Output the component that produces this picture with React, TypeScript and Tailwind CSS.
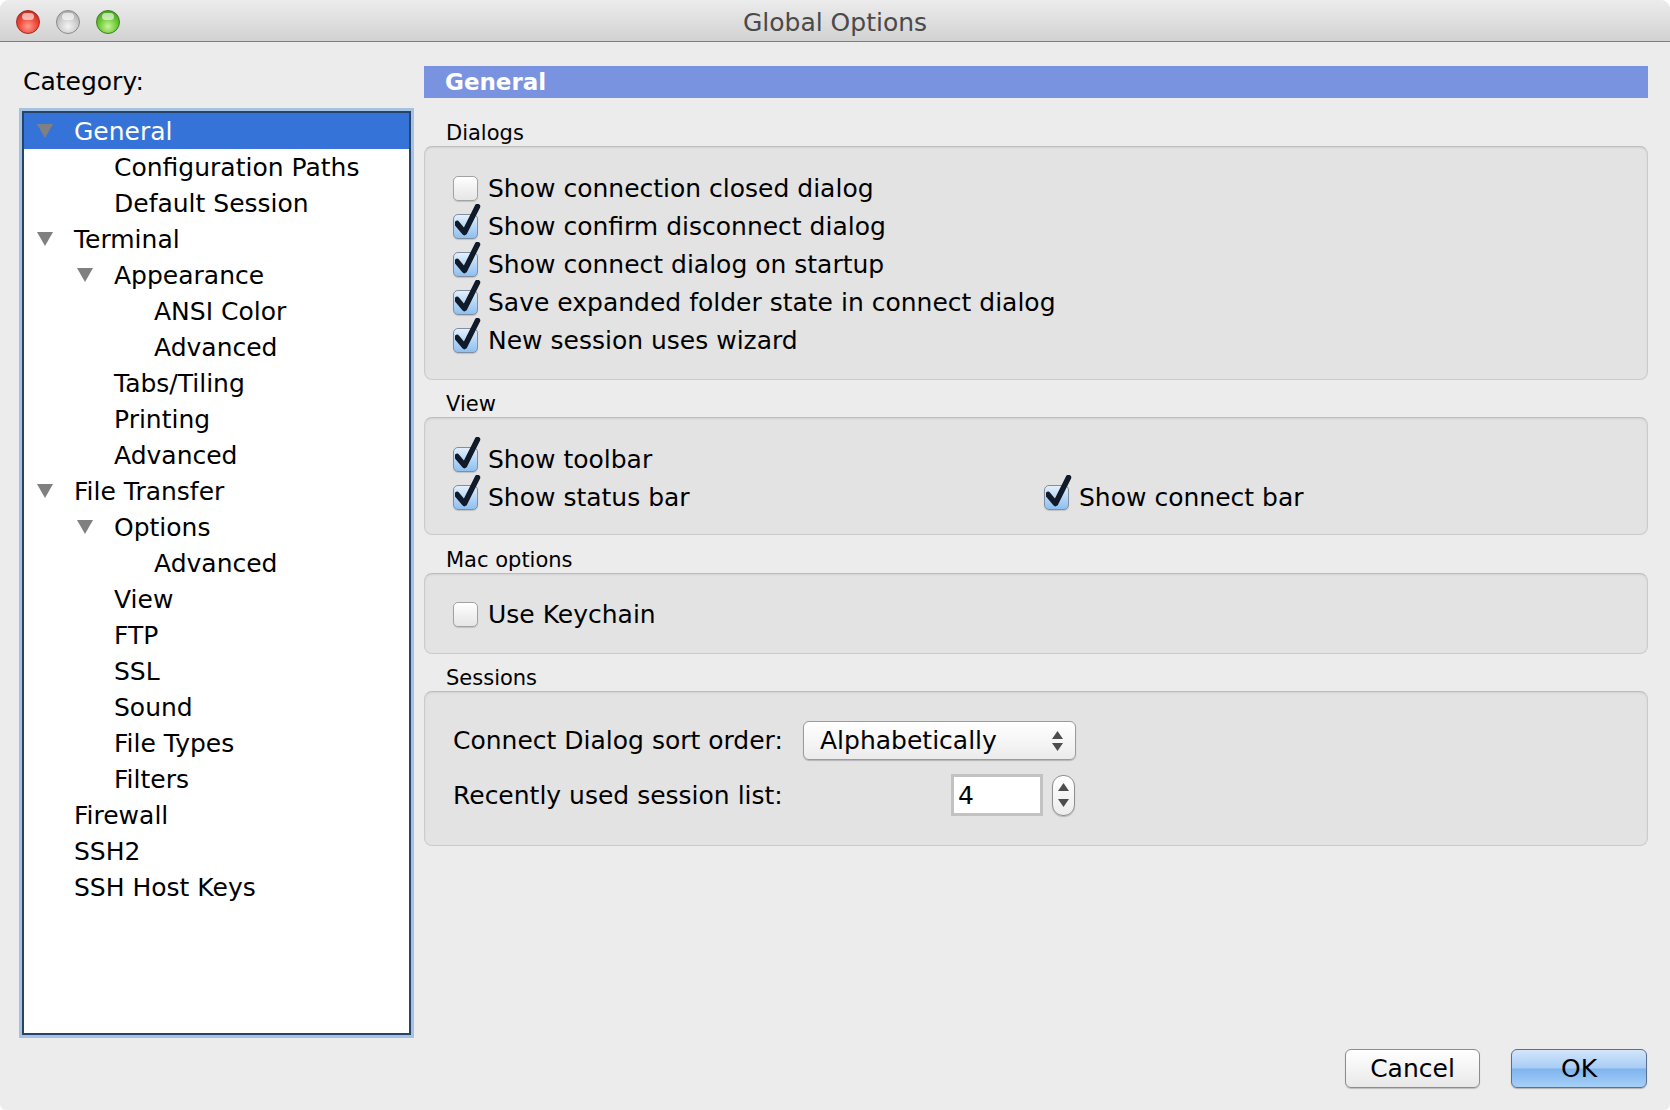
import React from 'react';

type TreeItem = { label: string; level: number; expanded?: boolean; selected?: boolean };

const tree: TreeItem[] = [
  { label: 'General', level: 0, expanded: true, selected: true },
  { label: 'Configuration Paths', level: 1 },
  { label: 'Default Session', level: 1 },
  { label: 'Terminal', level: 0, expanded: true },
  { label: 'Appearance', level: 1, expanded: true },
  { label: 'ANSI Color', level: 2 },
  { label: 'Advanced', level: 2 },
  { label: 'Tabs/Tiling', level: 1 },
  { label: 'Printing', level: 1 },
  { label: 'Advanced', level: 1 },
  { label: 'File Transfer', level: 0, expanded: true },
  { label: 'Options', level: 1, expanded: true },
  { label: 'Advanced', level: 2 },
  { label: 'View', level: 1 },
  { label: 'FTP', level: 1 },
  { label: 'SSL', level: 1 },
  { label: 'Sound', level: 1 },
  { label: 'File Types', level: 1 },
  { label: 'Filters', level: 1 },
  { label: 'Firewall', level: 0 },
  { label: 'SSH2', level: 0 },
  { label: 'SSH Host Keys', level: 0 },
];

const indent = ['pl-[13px]', 'pl-[53px]', 'pl-[93px]'];

function Triangle() {
  return (
    <svg width="16" height="14" viewBox="0 0 16 14" className="shrink-0">
      <path d="M0 0 H16 L8 14 Z" fill="#808080" />
    </svg>
  );
}

function TreeRow({ item }: { item: TreeItem }) {
  return (
    <div
      className={`flex items-center h-[36px] ${indent[item.level]} ${
        item.selected ? 'bg-[#3673d8] text-white' : 'text-black'
      }`}
    >
      <span className="w-[37px] shrink-0 flex items-center">{item.expanded && <Triangle />}</span>
      <span className="text-[25px] leading-none">{item.label}</span>
    </div>
  );
}

function Checkbox({ checked }: { checked?: boolean }) {
  return (
    <span className="relative shrink-0 w-[25px] h-[25px]">
      <span
        className={`block w-full h-full rounded-[5px] border ${
          checked
            ? 'border-[#7f8ea3] bg-[linear-gradient(#e4f0fc,#b3d4f5_55%,#8ec0f0)]'
            : 'border-[#a2a2a2] bg-[linear-gradient(#ffffff,#f1f1f1_50%,#e6e6e6)]'
        } shadow-[0_1px_1px_rgba(0,0,0,0.15)]`}
      />
      {checked && (
        <svg width="30" height="34" viewBox="0 0 30 34" className="absolute left-[2px] top-[-10px]">
          <path
            d="M2 19.5 L9.5 28.5 L22.5 2.5"
            fill="none"
            stroke="#101a28"
            strokeWidth="5.5"
            strokeLinecap="round"
            strokeLinejoin="round"
          />
        </svg>
      )}
    </span>
  );
}

function CheckRow({ label, checked }: { label: string; checked?: boolean }) {
  return (
    <div className="flex items-center h-[38px] gap-[10px]">
      <Checkbox checked={checked} />
      <span className="text-[25px] leading-none text-black">{label}</span>
    </div>
  );
}

function GroupLabel({ children, className }: { children: React.ReactNode; className: string }) {
  return <div className={`h-[26px] leading-[26px] text-[21px] text-black pl-[22px] ${className}`}>{children}</div>;
}

function GroupBox({ children, className }: { children: React.ReactNode; className: string }) {
  return (
    <div
      className={`rounded-[8px] border border-[#cbcbcb] border-t-[#bdbdbd] bg-[#e3e3e3] shadow-[inset_0_1px_2px_rgba(0,0,0,0.08)] pl-[28px] ${className}`}
    >
      {children}
    </div>
  );
}

function UpDown({ size = 'sm' }: { size?: 'sm' | 'lg' }) {
  return (
    <span className={`flex flex-col items-center ${size === 'lg' ? 'gap-[8px]' : 'gap-[4px]'}`}>
      <svg width="11" height="8" viewBox="0 0 11 8">
        <path d="M5.5 0 L11 8 H0 Z" fill="#4d4d4d" />
      </svg>
      <svg width="11" height="8" viewBox="0 0 11 8">
        <path d="M0 0 H11 L5.5 8 Z" fill="#4d4d4d" />
      </svg>
    </span>
  );
}

function TrafficLight({ color }: { color: 'red' | 'gray' | 'green' }) {
  const bg = {
    red: 'bg-[radial-gradient(circle_at_50%_70%,#ff9c8f_0%,#f04b3c_45%,#b8160c_100%)] border-[#9c2a22]',
    gray: 'bg-[radial-gradient(circle_at_50%_70%,#f4f4f4_0%,#cfcfcf_45%,#9b9b9b_100%)] border-[#8a8a8a]',
    green: 'bg-[radial-gradient(circle_at_50%_70%,#c7f59a_0%,#72cc3a_45%,#2f8a10_100%)] border-[#3f7d23]',
  }[color];
  return (
    <span className={`relative w-[24px] h-[24px] rounded-full border ${bg}`}>
      <span className="absolute left-[5px] top-[2px] w-[12px] h-[7px] rounded-full bg-white/60" />
    </span>
  );
}

export default function App() {
  return (
    <div className="w-[1670px] h-[1110px] bg-white font-['DejaVu_Sans',sans-serif]">
      <div className="flex flex-col h-full bg-[#ececec] rounded-t-[9px] rounded-b-[6px] overflow-hidden">
        {/* title bar */}
        <div className="relative h-[42px] shrink-0 flex items-center border-b border-[#7d7d7d] bg-[linear-gradient(#ececec,#d2d2d2)]">
          <div className="flex items-center gap-[16px] pl-[16px] pt-[2px]">
            <TrafficLight color="red" />
            <TrafficLight color="gray" />
            <TrafficLight color="green" />
          </div>
          <div className="absolute inset-x-0 top-0 h-[42px] pt-[3px] flex items-center justify-center text-[25px] text-[#4a4a4a] pointer-events-none">
            Global Options
          </div>
        </div>

        <div className="flex">
          {/* category tree */}
          <div className="w-[411px] shrink-0 pl-[22px]">
            <div className="mt-[25px] h-[30px] leading-[30px] text-[25px] text-black pl-[1px]">Category:</div>
            <div className="mt-[14px] h-[924px] bg-white border-2 border-[#26446a] shadow-[0_0_0_3px_rgba(110,160,220,0.55)]">
              {tree.map((item, i) => (
                <TreeRow key={i} item={item} />
              ))}
            </div>
          </div>

          {/* settings panel */}
          <div className="flex-1 pl-[13px] pr-[22px]">
            <div className="mt-[24px] h-[32px] bg-[#7a93e1] flex items-center pl-[21px] text-white font-bold text-[23px]">
              General
            </div>

            <GroupLabel className="mt-[22px]">Dialogs</GroupLabel>
            <GroupBox className="pt-[22px] pb-[20px]">
              <CheckRow label="Show connection closed dialog" />
              <CheckRow label="Show confirm disconnect dialog" checked />
              <CheckRow label="Show connect dialog on startup" checked />
              <CheckRow label="Save expanded folder state in connect dialog" checked />
              <CheckRow label="New session uses wizard" checked />
            </GroupBox>

            <GroupLabel className="mt-[11px]">View</GroupLabel>
            <GroupBox className="pt-[22px] pb-[18px]">
              <CheckRow label="Show toolbar" checked />
              <div className="flex">
                <div className="w-[591px]">
                  <CheckRow label="Show status bar" checked />
                </div>
                <CheckRow label="Show connect bar" checked />
              </div>
            </GroupBox>

            <GroupLabel className="mt-[12px]">Mac options</GroupLabel>
            <GroupBox className="pt-[21px] pb-[20px]">
              <CheckRow label="Use Keychain" />
            </GroupBox>

            <GroupLabel className="mt-[11px]">Sessions</GroupLabel>
            <GroupBox className="pt-[29px] pb-[29px]">
              <div className="flex items-center h-[39px]">
                <span className="w-[350px] text-[25px] leading-none text-black">Connect Dialog sort order:</span>
                <div className="w-[273px] h-[39px] rounded-[6px] border border-[#9b9b9b] bg-[linear-gradient(#ffffff,#f6f6f6_50%,#ebebeb)] shadow-[0_1px_1px_rgba(0,0,0,0.2)] flex items-center justify-between pl-[16px] pr-[12px]">
                  <span className="text-[25px] leading-none text-black">Alphabetically</span>
                  <UpDown />
                </div>
              </div>
              <div className="flex items-center h-[42px] mt-[14px]">
                <span className="w-[498px] text-[25px] leading-none text-black">Recently used session list:</span>
                <div className="w-[92px] h-[42px] bg-white border-[3px] border-[#c2c2c2] flex items-center pl-[4px] text-[25px] leading-none text-black">
                  4
                </div>
                <div className="ml-[9px] w-[23px] h-[41px] rounded-[11px] border border-[#8f8f8f] bg-[linear-gradient(#ffffff,#ececec)] shadow-[0_1px_1px_rgba(0,0,0,0.2)] flex items-center justify-center">
                  <UpDown size="lg" />
                </div>
              </div>
            </GroupBox>
          </div>
        </div>

        {/* buttons */}
        <div className="flex justify-end gap-[31px] pr-[23px] mt-[14px]">
          <button className="w-[135px] h-[39px] rounded-[6px] border border-[#8c8c8c] bg-[linear-gradient(#ffffff,#f4f4f4_50%,#e8e8e8)] shadow-[0_1px_1px_rgba(0,0,0,0.2)] text-[25px] leading-none text-black">
            Cancel
          </button>
          <button className="w-[136px] h-[39px] rounded-[6px] border border-[#5b6f94] bg-[linear-gradient(#d3e5fb,#a9cdf5_48%,#7fb4ee_52%,#a6d0f8)] shadow-[0_1px_1px_rgba(0,0,0,0.25)] text-[25px] leading-none text-black">
            OK
          </button>
        </div>
      </div>
    </div>
  );
}
